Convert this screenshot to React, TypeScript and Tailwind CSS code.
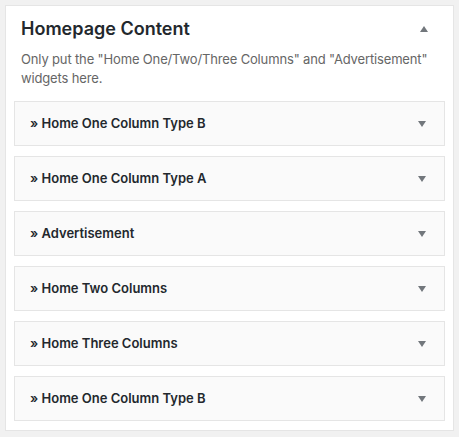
const widgets = [
  'Home One Column Type B',
  'Home One Column Type A',
  'Advertisement',
  'Home Two Columns',
  'Home Three Columns',
  'Home One Column Type B',
];

function Caret({ up }: { up?: boolean }) {
  return (
    <svg width="8" height="6" viewBox="0 0 8 6" className="shrink-0">
      <path d={up ? 'M4 0L8 6H0Z' : 'M0 0H8L4 6Z'} fill="#72777c" />
    </svg>
  );
}

export default function App() {
  return (
    <div
      className="h-screen bg-[#f1f1f1] p-[5px]"
      style={{ fontFamily: 'Inter, "Noto Sans", sans-serif' }}
    >
      <div className="border border-[#e5e5e5] bg-white px-[8px] pb-[9px] pt-[11px]">
        <div className="flex h-[24px] items-center justify-between pl-[7px] pr-[17px]">
          <h2 className="text-[18px] font-semibold leading-[24px] text-[#23282d]">
            Homepage Content
          </h2>
          <Caret up />
        </div>
        <p className="mt-[9px] pl-[7px] pr-[6px] text-[13px] leading-[19px] tracking-[-0.15px] text-[#666]">
          Only put the "Home One/Two/Three Columns" and "Advertisement" widgets here.
        </p>
        <div className="mt-[13px] flex flex-col gap-[10px]">
          {widgets.map((name, i) => (
            <div
              key={i}
              className="flex h-[45px] items-center justify-between border border-[#e5e5e5] bg-[#fafafa] pl-[15px] pr-[18px]"
            >
              <span className="text-[13px] font-semibold text-[#23282d]">» {name}</span>
              <Caret />
            </div>
          ))}
        </div>
      </div>
    </div>
  );
}
